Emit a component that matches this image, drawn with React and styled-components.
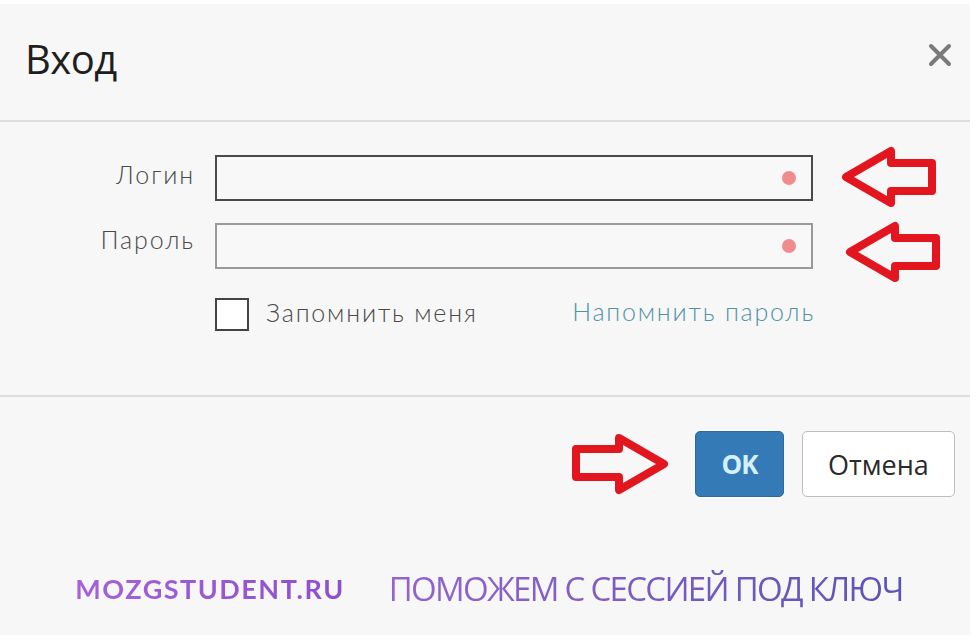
import React from 'react';
import styled, {createGlobalStyle} from 'styled-components';

const RED = '#e3151f';

const GlobalStyle = createGlobalStyle`
  html, body {
    margin: 0;
    padding: 0;
    background: #ffffff;
  }
  * {
    box-sizing: border-box;
  }
`;

const Page = styled.div`
  width: 980px;
  height: 640px;
  padding: 4px 10px 5px 0;
  background: #ffffff;
`;

const Dialog = styled.div`
  height: 100%;
  background: #f7f7f7;
  display: flex;
  flex-direction: column;
  font-family: 'Open Sans', 'Noto Sans', sans-serif;
`;

const Header = styled.div`
  height: 118px;
  display: flex;
  align-items: center;
  justify-content: space-between;
  padding: 0 17px 0 25px;
  border-bottom: 2px solid #dddddd;
`;

const Title = styled.h1`
  margin: 0 0 8px;
  font-size: 40px;
  font-weight: 400;
  color: #1e1e1e;
  letter-spacing: -0.5px;
`;

const CloseButton = styled.button`
  border: 0;
  background: none;
  padding: 0;
  width: 26px;
  height: 26px;
  margin-bottom: 14px;
  cursor: pointer;
  svg {
    display: block;
  }
`;

const Body = styled.div`
  height: 275px;
  padding-top: 33px;
  border-bottom: 2px solid #dddddd;
`;

const FormGrid = styled.div`
  display: grid;
  grid-template-columns: 193px 598px 125px;
  grid-auto-rows: 46px;
  column-gap: 22px;
  row-gap: 22px;
`;

const Label = styled.label`
  align-self: center;
  justify-self: end;
  font-family: 'Lato', 'Noto Sans', sans-serif;
  font-weight: 300;
  font-size: 25px;
  color: #4a4a4a;
  letter-spacing: 1.9px;
  margin-right: -2px;
  padding-bottom: ${props => (props.$raise ? '14px' : '8px')};
`;

const Field = styled.div`
  border: 2px solid ${props => props.$border};
  background: #f8f8f8;
  display: flex;
  align-items: center;
  justify-content: flex-end;
  padding-right: 15px;
`;

const RequiredDot = styled.span`
  width: 14px;
  height: 14px;
  border-radius: 50%;
  background: #f08c8c;
`;

const ArrowCell = styled.div`
  display: flex;
  align-items: center;
  margin-left: ${props => props.$shift}px;
  margin-top: ${props => props.$lift}px;
`;

const OptionsRow = styled.div`
  grid-column: 2 / 3;
  display: flex;
  align-items: center;
  justify-content: space-between;
  margin-top: 6px;
  height: 34px;
`;

const CheckLabel = styled.label`
  display: flex;
  align-items: center;
  gap: 17px;
  font-family: 'Lato', 'Noto Sans', sans-serif;
  font-weight: 300;
  font-size: 25px;
  color: #4a4a4a;
  letter-spacing: 1.8px;
  span + span {
    padding-bottom: 4px;
  }
`;

const CheckBox = styled.span`
  width: 34px;
  height: 33px;
  border: 2px solid #444444;
  background: #ffffff;
`;

const ForgotLink = styled.a`
  font-family: 'Lato', 'Noto Sans', sans-serif;
  font-weight: 300;
  font-size: 25px;
  color: #4f93a6;
  letter-spacing: 1.8px;
  margin-right: -2px;
  text-decoration: none;
  padding-bottom: 6px;
`;

const Footer = styled.div`
  display: flex;
  justify-content: flex-end;
  align-items: center;
  padding: 34px 15px 0 0;
`;

const Buttons = styled.div`
  display: flex;
  gap: 18px;
  margin-left: 26px;
`;

const Button = styled.button`
  height: 66px;
  width: ${props => props.$width}px;
  border-radius: 5px;
  font-family: 'Open Sans', 'Noto Sans', sans-serif;
  font-size: ${props => (props.$primary ? '26px' : '27px')};
  font-weight: ${props => (props.$primary ? 700 : 400)};
  color: ${props => (props.$primary ? '#d4f1fb' : '#2a2a2a')};
  background: ${props => (props.$primary ? '#347ab6' : '#ffffff')};
  border: 1px solid ${props => (props.$primary ? '#2c6aa0' : '#bdbdbd')};
  letter-spacing: ${props => (props.$primary ? '-1px' : '0')};
  cursor: pointer;
`;

const Promo = styled.div`
  flex: 1;
  display: flex;
  justify-content: center;
  align-items: center;
  gap: 44px;
  padding: 44px 62px 0 70px;
`;

const Brand = styled.span`
  font-family: 'Lato', 'Noto Sans', sans-serif;
  font-weight: 700;
  font-size: 27px;
  letter-spacing: 1.5px;
  background: linear-gradient(90deg, #a562d9, #8d4fd0);
  -webkit-background-clip: text;
  background-clip: text;
  color: transparent;
`;

const Slogan = styled.span`
  font-family: 'Open Sans', 'Noto Sans', sans-serif;
  font-weight: 400;
  font-size: 33px;
  letter-spacing: -1.7px;
  background: linear-gradient(90deg, #9465cf, #5d52b6);
  -webkit-background-clip: text;
  background-clip: text;
  color: transparent;
`;

const LeftArrow = () => (
  <svg width="96" height="62" viewBox="0 0 96 62">
    <path
      d="M5 31 L50 5 L50 17 L91 17 L91 45 L50 45 L50 57 Z"
      fill="none"
      stroke={RED}
      strokeWidth="8"
      strokeLinejoin="round"
    />
  </svg>
);

const RightArrow = () => (
  <svg width="98" height="62" viewBox="0 0 98 62">
    <path
      d="M5 16 L48 16 L48 5 L93 31 L48 57 L48 44 L5 44 Z"
      fill="none"
      stroke={RED}
      strokeWidth="8"
      strokeLinejoin="round"
    />
  </svg>
);

const CloseIcon = () => (
  <svg width="26" height="26" viewBox="0 0 26 26">
    <path d="M4 4 L22 22 M22 4 L4 22" stroke="#7a7a7a" strokeWidth="4" strokeLinecap="round" />
  </svg>
);

export default function App() {
  return (
    <Page>
      <GlobalStyle />
      <Dialog>
        <Header>
          <Title>Вход</Title>
          <CloseButton aria-label="Закрыть">
            <CloseIcon />
          </CloseButton>
        </Header>
        <Body>
          <FormGrid>
            <Label>Логин</Label>
            <Field $border="#4a4a4a">
              <RequiredDot />
            </Field>
            <ArrowCell $shift={6} $lift={-2}>
              <LeftArrow />
            </ArrowCell>
            <Label $raise>Пароль</Label>
            <Field $border="#9a9a9a">
              <RequiredDot />
            </Field>
            <ArrowCell $shift={10} $lift={12}>
              <LeftArrow />
            </ArrowCell>
            <OptionsRow>
              <CheckLabel>
                <CheckBox />
                <span>Запомнить меня</span>
              </CheckLabel>
              <ForgotLink href="#">Напомнить пароль</ForgotLink>
            </OptionsRow>
          </FormGrid>
        </Body>
        <Footer>
          <RightArrow />
          <Buttons>
            <Button $primary $width={89}>OK</Button>
            <Button $width={153}>Отмена</Button>
          </Buttons>
        </Footer>
        <Promo>
          <Brand>MOZGSTUDENT.RU</Brand>
          <Slogan>ПОМОЖЕМ С СЕССИЕЙ ПОД КЛЮЧ</Slogan>
        </Promo>
      </Dialog>
    </Page>
  );
}
